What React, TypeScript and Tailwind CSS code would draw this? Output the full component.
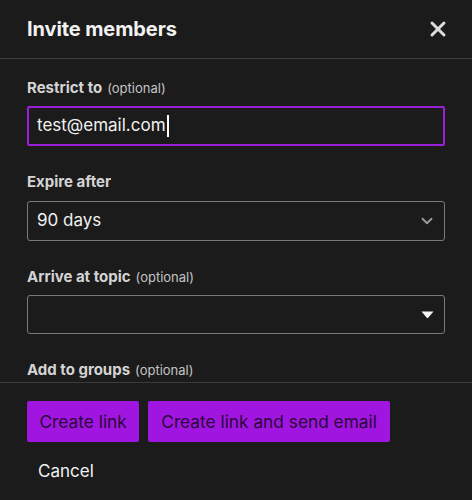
import { X, ChevronDown } from "lucide-react"

function FieldLabel({ title, optional }: { title: string; optional?: boolean }) {
  return (
    <div className="h-[20px] flex items-baseline gap-[5px] leading-[20px]">
      <span className="text-[15px] font-bold text-[#d4d4d4]">{title}</span>
      {optional && <span className="text-[13px] text-[#c4c4c4]">(optional)</span>}
    </div>
  )
}

export default function App() {
  return (
    <div
      className="w-[472px] h-[500px] flex flex-col bg-[#1b1b1b] text-white overflow-hidden"
      style={{ fontFamily: "Inter, 'Noto Sans', sans-serif" }}
    >
      <div className="h-[59px] shrink-0 flex items-center justify-between pl-[27px] pr-[22px] border-b border-[#3c3c3c]">
        <h1 className="text-[20px] font-bold tracking-[-0.1px] text-[#f2f2f2]">Invite members</h1>
        <button className="text-[#dcdcdc]">
          <X className="w-[24px] h-[24px]" strokeWidth={3} />
        </button>
      </div>

      <div className="flex-1 overflow-hidden px-[27px] pt-[19px]">
        <FieldLabel title="Restrict to" optional />
        <div className="mt-[8px] h-[40px] border-2 border-[#9a1fd8] rounded-[2px] flex items-center px-[8px]">
          <span className="text-[17px] text-[#f0f0f0]">test@email.com</span>
          <span className="w-[2px] h-[22px] bg-white ml-[1px]" />
        </div>

        <div className="mt-[26px]">
          <FieldLabel title="Expire after" />
        </div>
        <div className="mt-[9px] h-[40px] border border-[#7a7a7a] rounded-[3px] flex items-center justify-between pl-[9px] pr-[8px]">
          <span className="text-[17px] text-[#f0f0f0]">90 days</span>
          <ChevronDown className="w-[18px] h-[18px] text-[#9a9a9a]" strokeWidth={2.5} />
        </div>

        <div className="mt-[26px]">
          <FieldLabel title="Arrive at topic" optional />
        </div>
        <div className="mt-[8px] h-[39px] border border-[#7a7a7a] rounded-[3px] flex items-center justify-end pr-[10px]">
          <svg width="13" height="8" viewBox="0 0 13 8">
            <path d="M0.5 0.5 H12.5 L7.2 6.8 Q6.5 7.6 5.8 6.8 Z" fill="#f4f4f4" />
          </svg>
        </div>

        <div className="mt-[26px]">
          <FieldLabel title="Add to groups" optional />
        </div>
      </div>

      <div className="h-[118px] shrink-0 border-t border-[#3c3c3c] px-[27px] pt-[18px]">
        <div className="flex gap-[9px]">
          <button className="h-[41px] px-[12.5px] rounded-[2px] bg-[#a016e0] text-[17.3px] text-[#2a0838]">
            Create link
          </button>
          <button className="h-[41px] px-[13px] rounded-[2px] bg-[#a016e0] text-[17.3px] text-[#2a0838]">
            Create link and send email
          </button>
        </div>
        <button className="mt-[10px] h-[40px] px-[11px] text-[17px] text-[#f2f2f2]">Cancel</button>
      </div>
    </div>
  )
}
